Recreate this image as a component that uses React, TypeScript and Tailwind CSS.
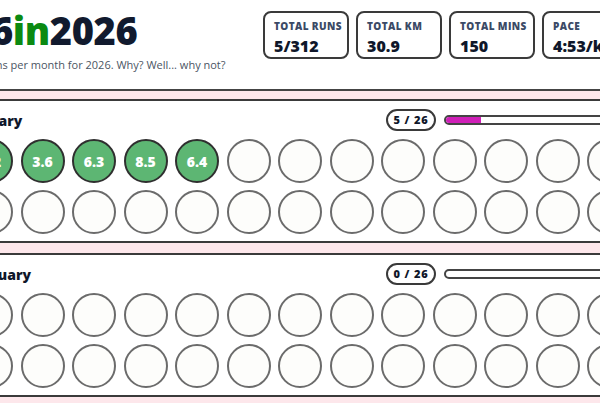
import * as React from 'react';

// 统计卡片
function StatBox({ label, value }: { label: string; value: string }) {
  return (
    <div className="w-[86px] h-[48px] rounded-lg border-2 border-[#3a3a3a] bg-white px-[9px] pt-[6px]">
      <div className="text-[10px] font-extrabold tracking-[0.04em] text-[#3b4a66] leading-[14px] whitespace-nowrap">
        {label}
      </div>
      <div className="mt-[3px] text-[16px] font-extrabold text-[#0f172a] leading-[20px] whitespace-nowrap">
        {value}
      </div>
    </div>
  );
}

// 单个跑步圆圈
function RunDot({ km }: { km?: string }) {
  if (km) {
    return (
      <div className="w-[44px] h-[44px] rounded-full border-2 border-[#2f2f2f] bg-[#5db673] flex items-center justify-center text-[14px] font-extrabold text-white">
        {km}
      </div>
    );
  }
  return <div className="w-[44px] h-[44px] rounded-full border-2 border-[#6b6b6b] bg-[#fdfdfb]" />;
}

// 月份卡片
function MonthCard({ name, runs }: { name: string; runs: string[] }) {
  const total = 26;
  const pct = (runs.length / total) * 100;
  const slots = Array.from({ length: total }, (_, i) => runs[i]);

  return (
    <section className="border-2 border-[#3a3a3a] bg-white px-4 pt-2 pb-[7px]">
      <div className="flex items-center h-[22px]">
        <h2 className="-ml-[3px] text-[14px] font-extrabold text-[#0f172a]">{name}</h2>
        <div className="ml-auto flex items-center gap-2">
          <div className="h-[22px] w-[50px] rounded-full border-2 border-[#3a3a3a] flex items-center justify-center text-[11px] font-extrabold text-[#0f172a] tracking-[0.08em] whitespace-nowrap">
            {runs.length} / {total}
          </div>
          <div className="w-[185px] h-[10px] rounded-full border-2 border-[#444] bg-white overflow-hidden">
            <div className="h-full bg-[#d01fb8]" style={{ width: `${pct}%` }} />
          </div>
        </div>
      </div>
      <div className="mt-2 grid grid-cols-[repeat(13,44px)] gap-x-[7.5px] gap-y-[7px]">
        {slots.map((km, i) => (
          <RunDot key={i} km={km} />
        ))}
      </div>
    </section>
  );
}

export default function App() {
  return (
    <div className="w-[600px] min-h-screen overflow-hidden bg-[#fde7eb] font-['Open_Sans',sans-serif]">
      {/* 顶部 */}
      <header className="h-[91px] bg-white border-b-2 border-[#444]">
        <div className="ml-[-31px] w-[659px] flex justify-between items-start">
          <div className="pt-[6px] shrink-0">
            <h1 className="text-[38px] leading-[48px] font-extrabold tracking-[-0.01em] text-[#111a2e]">
              26<span className="text-[#0b8a12]">in</span>2026
            </h1>
            <p className="mt-[3px] text-[11px] text-[#4b5563] whitespace-nowrap">
              26 runs per month for 2026. Why? Well... why not?
            </p>
          </div>
          <div className="flex gap-[7px] pt-[11px] shrink-0">
            <StatBox label="TOTAL RUNS" value="5/312" />
            <StatBox label="TOTAL KM" value="30.9" />
            <StatBox label="TOTAL MINS" value="150" />
            <StatBox label="PACE" value="4:53/km" />
          </div>
        </div>
      </header>

      {/* 月份列表 */}
      <main className="pt-2 pb-4">
        <div className="ml-[-49px] w-[696px] flex flex-col gap-[10px]">
          <MonthCard name="January" runs={['6.2', '3.6', '6.3', '8.5', '6.4']} />
          <MonthCard name="February" runs={[]} />
        </div>
      </main>
    </div>
  );
}
